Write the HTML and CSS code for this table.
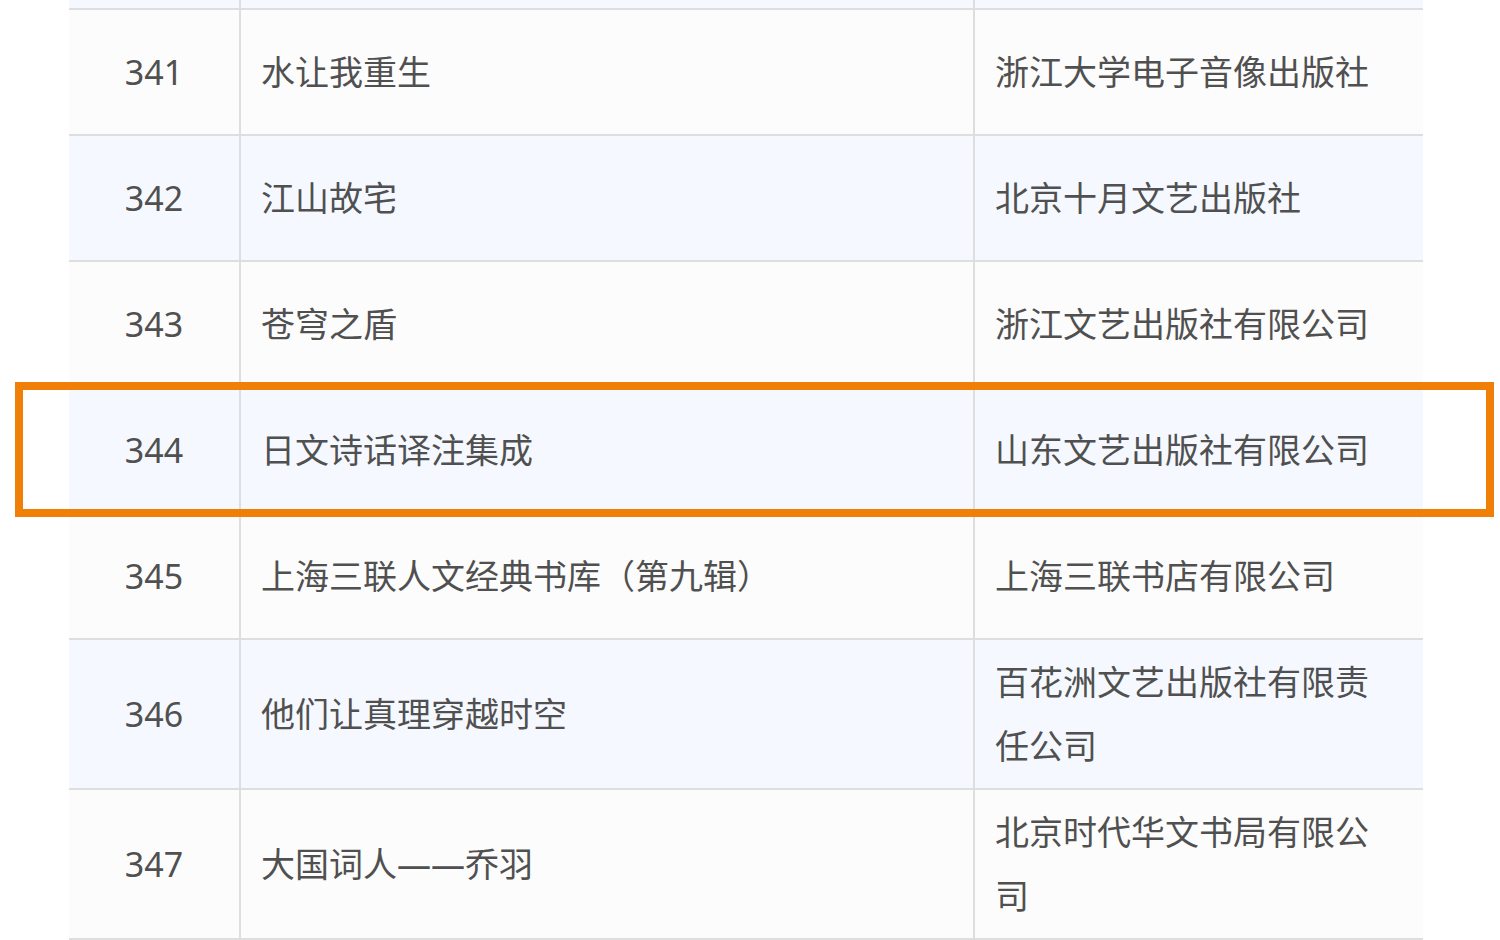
FILE: index.html
```html
<!DOCTYPE html>
<html lang="zh-CN">
<head>
<meta charset="utf-8">
<title>名单</title>
<link rel="stylesheet" href="styles.css">
</head>
<body>
<div class="table">
  <div class="row even partial">
    <div class="cell num"></div>
    <div class="cell"></div>
    <div class="cell"></div>
  </div>
  <div class="row odd">
    <div class="cell num">341</div>
    <div class="cell">水让我重生</div>
    <div class="cell">浙江大学电子音像出版社</div>
  </div>
  <div class="row even">
    <div class="cell num">342</div>
    <div class="cell">江山故宅</div>
    <div class="cell">北京十月文艺出版社</div>
  </div>
  <div class="row odd">
    <div class="cell num">343</div>
    <div class="cell">苍穹之盾</div>
    <div class="cell">浙江文艺出版社有限公司</div>
  </div>
  <div class="row even highlight">
    <div class="cell num">344</div>
    <div class="cell">日文诗话译注集成</div>
    <div class="cell">山东文艺出版社有限公司</div>
  </div>
  <div class="row odd">
    <div class="cell num">345</div>
    <div class="cell">上海三联人文经典书库（第九辑）</div>
    <div class="cell">上海三联书店有限公司</div>
  </div>
  <div class="row even">
    <div class="cell num">346</div>
    <div class="cell">他们让真理穿越时空</div>
    <div class="cell">百花洲文艺出版社有限责任公司</div>
  </div>
  <div class="row odd">
    <div class="cell num">347</div>
    <div class="cell">大国词人——乔羽</div>
    <div class="cell">北京时代华文书局有限公司</div>
  </div>
</div>
</body>
</html>
```
FILE: styles.css
```css
html, body {
  margin: 0;
  padding: 0;
  background: #ffffff;
}

body {
  font-family: "Noto Sans", "Noto Sans CJK SC", sans-serif;
  font-size: 34px;
  color: #505050;
  overflow: hidden;
}

.table {
  width: 1354px;
  margin-left: 69px;
}

.row {
  display: grid;
  grid-template-columns: 170px 734px 450px;
  border-bottom: 2px solid #dedede;
  position: relative;
}

.row.odd { background: #fcfcfc; }
.row.even { background: #f5f9ff; }

.cell {
  box-sizing: border-box;
  min-height: 124px;
  padding: 10px 30px 10px 20px;
  line-height: 64px;
  display: flex;
  align-items: center;
  border-left: 2px solid #dedede;
}

.cell.num {
  border-left: none;
  justify-content: center;
  padding: 10px 0 10px 0;
}

.row.partial .cell {
  min-height: 8px;
  height: 8px;
  padding: 0;
}

.highlight {
  z-index: 2;
}

.highlight::after {
  content: "";
  position: absolute;
  left: -54px;
  top: -6px;
  width: 1479px;
  height: 135px;
  box-sizing: border-box;
  border: 8px solid #ef7f06;
  pointer-events: none;
}
```
